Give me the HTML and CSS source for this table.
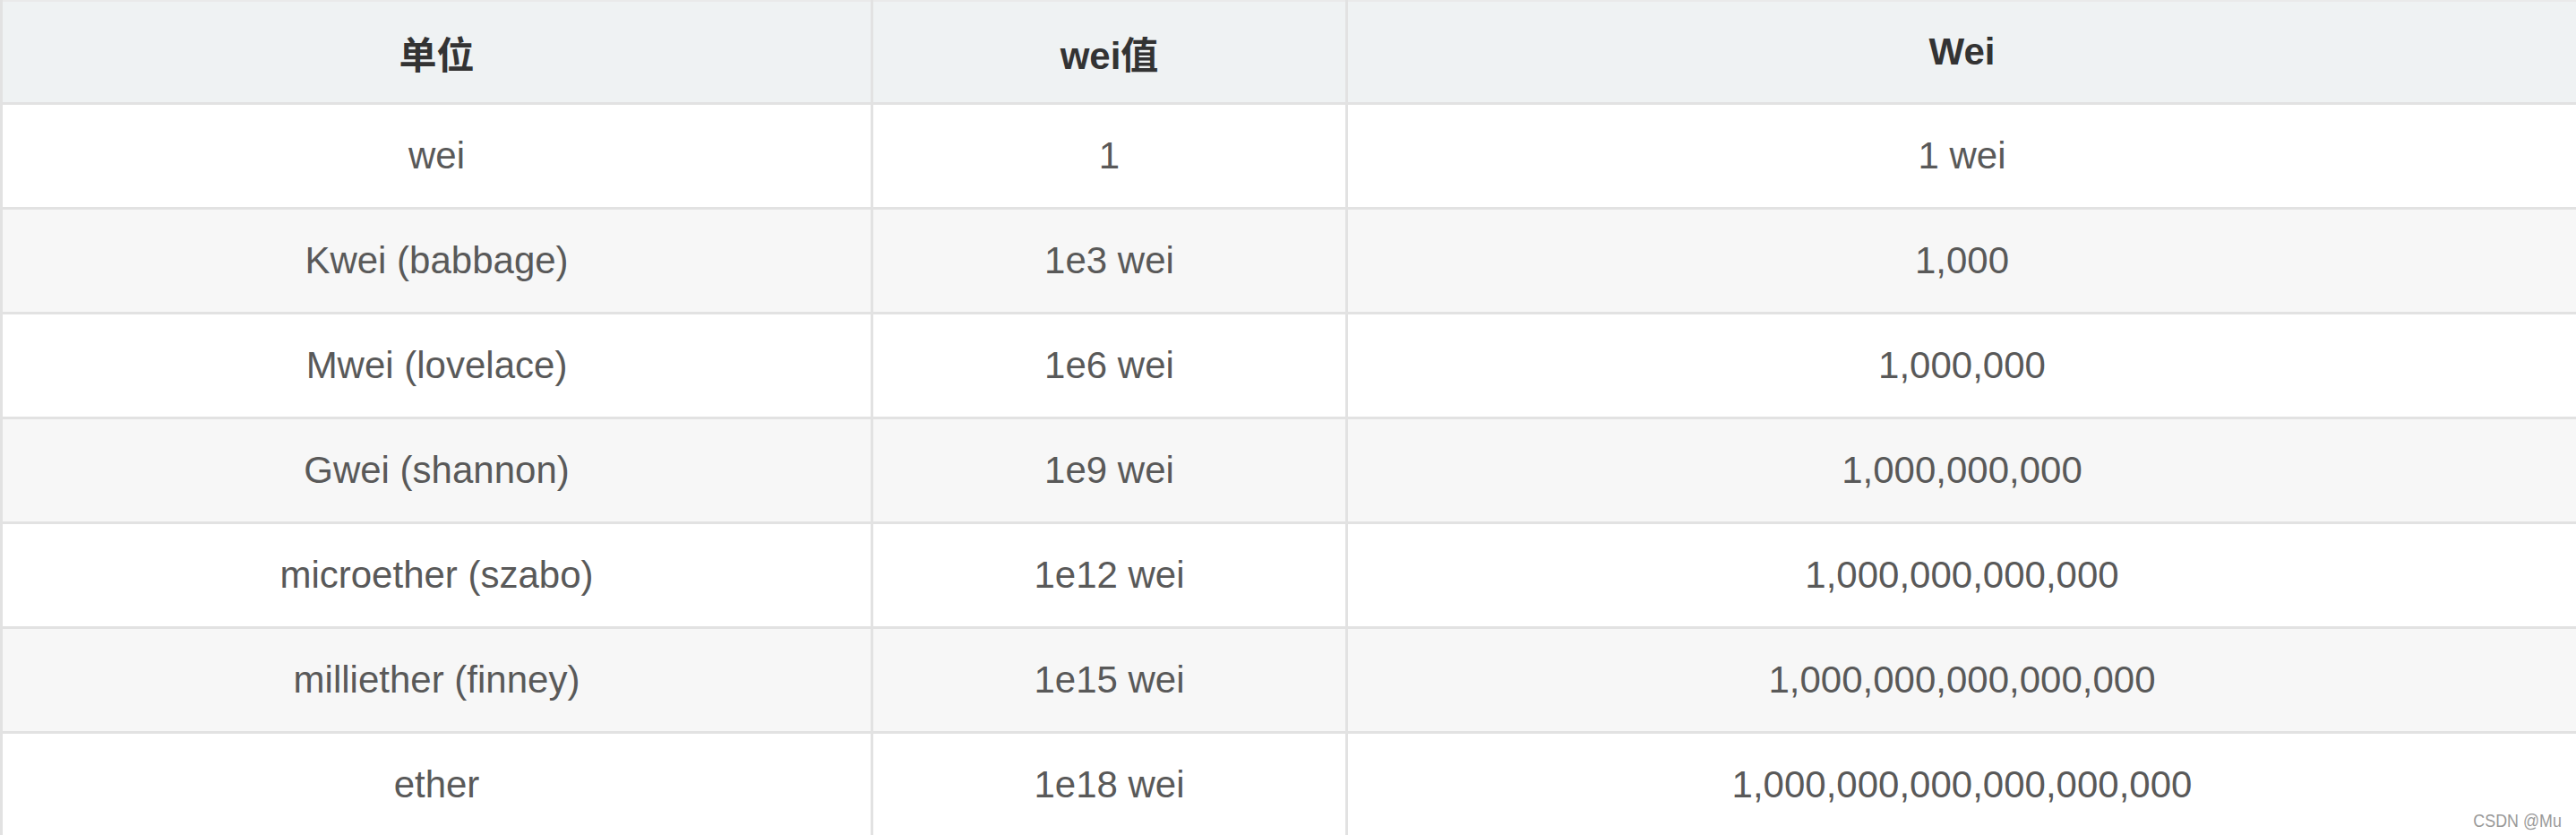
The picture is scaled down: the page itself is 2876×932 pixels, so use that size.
FILE: index.html
```html
<!DOCTYPE html>
<html lang="zh">
<head>
<meta charset="utf-8">
<title>Ether units</title>
<link rel="stylesheet" href="styles.css">
</head>
<body>
<div class="page">
  <table class="units">
    <colgroup>
      <col class="c1">
      <col class="c2">
      <col class="c3">
    </colgroup>
    <thead>
      <tr><th>单位</th><th>wei值</th><th>Wei</th></tr>
    </thead>
    <tbody>
      <tr><td>wei</td><td>1</td><td>1 wei</td></tr>
      <tr><td>Kwei (babbage)</td><td>1e3 wei</td><td>1,000</td></tr>
      <tr><td>Mwei (lovelace)</td><td>1e6 wei</td><td>1,000,000</td></tr>
      <tr><td>Gwei (shannon)</td><td>1e9 wei</td><td>1,000,000,000</td></tr>
      <tr><td>microether (szabo)</td><td>1e12 wei</td><td>1,000,000,000,000</td></tr>
      <tr><td>milliether (finney)</td><td>1e15 wei</td><td>1,000,000,000,000,000</td></tr>
      <tr><td>ether</td><td>1e18 wei</td><td>1,000,000,000,000,000,000</td></tr>
    </tbody>
  </table>
  <div class="watermark">CSDN @Mu</div>
</div>
</body>
</html>
```
FILE: styles.css
```css
html, body {
  margin: 0;
  padding: 0;
  background: #ffffff;
}
.page {
  position: relative;
  width: 2876px;
  height: 932px;
  overflow: hidden;
}
.units {
  width: 2876px;
  border-collapse: collapse;
  table-layout: fixed;
  font-family: "Liberation Sans", Arial, "Noto Sans CJK SC", sans-serif;
  font-size: 42px;
  color: #595959;
}
.c1 { width: 972px; }
.c2 { width: 530px; }
.c3 { width: 1374px; }
.units th,
.units td {
  border: 3px solid #e2e2e2;
  text-align: center;
  vertical-align: middle;
  padding: 0;
}
.units th {
  height: 112px;
  background: #eff2f3;
  color: #333333;
  font-weight: bold;
}
.units td {
  height: 114px;
}
.units tbody tr:nth-child(even) td {
  background: #f7f7f7;
}
.units tr:first-child th {
  border-top: 2px solid #eaeaea;
}
.watermark {
  position: absolute;
  right: 16px;
  bottom: 4px;
  font-family: "Liberation Sans", Arial, sans-serif;
  font-size: 21px;
  color: #999999;
  transform: scaleX(0.85);
  transform-origin: right bottom;
}
```
